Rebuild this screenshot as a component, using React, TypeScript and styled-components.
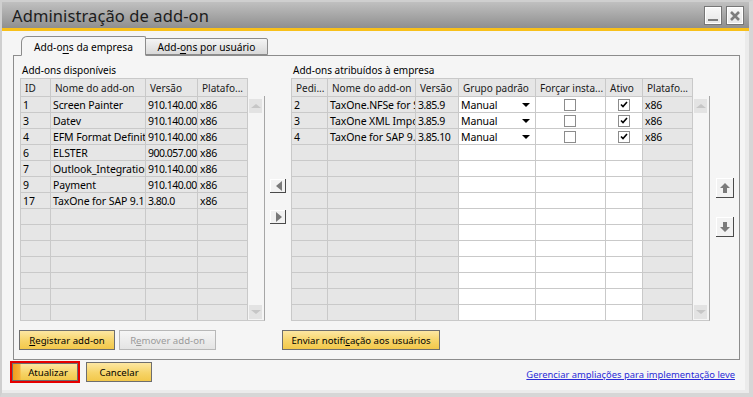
import React from "react";
import styled, { createGlobalStyle } from "styled-components";

const GlobalStyle = createGlobalStyle`
  html, body {
    margin: 0;
    padding: 0;
    background: #ffffff;
  }
  body {
    font-family: "Noto Sans", "Open Sans", sans-serif;
    font-size: 10px;
    color: #000;
  }
  * {
    box-sizing: border-box;
  }
`;

const available = [
  ["1", "Screen Painter", "910.140.00.", "x86"],
  ["3", "Datev", "910.140.00.", "x86"],
  ["4", "EFM Format Definition", "910.140.00.", "x86"],
  ["6", "ELSTER", "900.057.00.", "x86"],
  ["7", "Outlook_Integration", "910.140.00.", "x86"],
  ["9", "Payment", "910.140.00.", "x86"],
  ["17", "TaxOne for SAP 9.1", "3.80.0", "x86"],
];

const assigned = [
  ["2", "TaxOne.NFSe for SAP", "3.85.9"],
  ["3", "TaxOne XML Importer", "3.85.9"],
  ["4", "TaxOne for SAP 9.1", "3.85.10"],
];

const ROWS = 14;

const Check = () => (
  <svg width="8" height="7" viewBox="0 0 8 7">
    <path d="M1 3.5 L3 5.5 L7 1" stroke="#000" strokeWidth="1.6" fill="none" />
  </svg>
);

const App: React.FC = () => {
  const leftRows = Array.from({ length: ROWS }, (_, i) => available[i]);
  const rightRows = Array.from({ length: ROWS }, (_, i) => assigned[i]);

  return (
    <>
      <GlobalStyle />
      <Window>
        <TitleBar>
          <Title>Administração de add-on</Title>
          <WinButtons>
            <WinButton aria-label="Minimizar">
              <svg width="12" height="12" viewBox="0 0 12 12">
                <rect x="1" y="9" width="10" height="2" fill="#7d7d7d" />
              </svg>
            </WinButton>
            <WinButton aria-label="Fechar">
              <svg width="12" height="12" viewBox="0 0 12 12">
                <path d="M2 2 L10 10 M10 2 L2 10" stroke="#7d7d7d" strokeWidth="2.6" />
              </svg>
            </WinButton>
          </WinButtons>
        </TitleBar>
        <Accent />
        <Body>
          <Tabs>
            <Tab $active>
              Add-o<u>n</u>s da empresa
            </Tab>
            <Tab>
              Add-<u>o</u>ns por usuário
            </Tab>
          </Tabs>
          <Panel>
            <Lists>
              <Group>
                <GroupLabel>Add-ons disponíveis</GroupLabel>
                <ListBox>
                  <Grid $cols="30px 95px 52px 50px">
                    <HeadCell>ID</HeadCell>
                    <HeadCell>Nome do add-on</HeadCell>
                    <HeadCell>Versão</HeadCell>
                    <HeadCell>Platafo...</HeadCell>
                    {leftRows.map((r, i) =>
                      [0, 1, 2, 3].map((c) => (
                        <Cell key={`${i}-${c}`} $tight={c === 2}>
                          {r ? r[c] : ""}
                        </Cell>
                      ))
                    )}
                  </Grid>
                  <ScrollTrack>
                    <ScrollArrow>
                      <TriUp />
                    </ScrollArrow>
                    <ScrollArrow>
                      <TriDown />
                    </ScrollArrow>
                  </ScrollTrack>
                </ListBox>
              </Group>

              <MoveColumn>
                <ArrowButton aria-label="Remover">
                  <svg width="6" height="10" viewBox="0 0 6 10">
                    <path d="M6 0 L0 5 L6 10 Z" fill="#7a7a7a" />
                  </svg>
                </ArrowButton>
                <ArrowButton aria-label="Adicionar">
                  <svg width="6" height="10" viewBox="0 0 6 10">
                    <path d="M0 0 L6 5 L0 10 Z" fill="#7a7a7a" />
                  </svg>
                </ArrowButton>
              </MoveColumn>

              <Group>
                <GroupLabel $offset={2}>Add-ons atribuídos à empresa</GroupLabel>
                <ListBox>
                  <Grid $cols="36px 88px 43px 77px 70px 37px 50px">
                    <HeadCell>Pedi...</HeadCell>
                    <HeadCell>Nome do add-on</HeadCell>
                    <HeadCell>Versão</HeadCell>
                    <HeadCell>Grupo padrão</HeadCell>
                    <HeadCell>Forçar insta...</HeadCell>
                    <HeadCell>Ativo</HeadCell>
                    <HeadCell>Platafo...</HeadCell>
                    {rightRows.map((r, i) => (
                      <React.Fragment key={i}>
                        <Cell>{r ? r[0] : ""}</Cell>
                        <Cell>{r ? r[1] : ""}</Cell>
                        <Cell $tight>{r ? r[2] : ""}</Cell>
                        <Cell $white>
                          {r && (
                            <>
                              <span>Manual</span>
                              <DropArrow />
                            </>
                          )}
                        </Cell>
                        <Cell $white $center>
                          {r && <CheckBox />}
                        </Cell>
                        <Cell $white $center>
                          {r && (
                            <CheckBox>
                              <Check />
                            </CheckBox>
                          )}
                        </Cell>
                        <Cell>{r ? "x86" : ""}</Cell>
                      </React.Fragment>
                    ))}
                  </Grid>
                  <ScrollTrack>
                    <ScrollArrow>
                      <TriUp />
                    </ScrollArrow>
                    <ScrollArrow>
                      <TriDown />
                    </ScrollArrow>
                  </ScrollTrack>
                </ListBox>
              </Group>

              <OrderColumn>
                <OrderButton aria-label="Mover para cima">
                  <svg width="10" height="10" viewBox="0 0 10 10">
                    <path d="M5 0 L10 5 L7 5 L7 10 L3 10 L3 5 L0 5 Z" fill="#7a7a7a" />
                  </svg>
                </OrderButton>
                <OrderButton aria-label="Mover para baixo">
                  <svg width="10" height="10" viewBox="0 0 10 10">
                    <path d="M5 10 L10 5 L7 5 L7 0 L3 0 L3 5 L0 5 Z" fill="#7a7a7a" />
                  </svg>
                </OrderButton>
              </OrderColumn>
            </Lists>

            <PanelActions>
              <Button $width={96}>
                <u>R</u>egistrar add-on
              </Button>
              <Button $width={97} disabled>
                R<u>e</u>mover add-on
              </Button>
              <Button $width={158} $gap={62}>
                Enviar notifi<u>c</u>ação aos usuários
              </Button>
            </PanelActions>
          </Panel>

          <Footer>
            <Focus>
              <PrimaryButton>Atualizar</PrimaryButton>
            </Focus>
            <Button $width={66}>Cancelar</Button>
            <Link href="#">Gerenciar ampliações para implementação leve</Link>
          </Footer>
        </Body>
      </Window>
    </>
  );
};

const Window = styled.div`
  width: 753px;
  height: 397px;
  display: flex;
  flex-direction: column;
  border-top: 2px solid #cfcfcf;
  border-left: 2px solid #cfcfcf;
  border-right: 4px solid #d6d6d6;
  border-bottom: 4px solid #d6d6d6;
  background: #f5f5f5;
`;

const TitleBar = styled.div`
  height: 26px;
  flex: none;
  display: flex;
  align-items: center;
  justify-content: space-between;
  padding: 0 5px 0 10px;
  background: linear-gradient(#c0c0c0, #8f8f8f);
`;

const Title = styled.span`
  font-size: 16.5px;
  color: #1c1c1c;
  letter-spacing: 0.1px;
`;

const WinButtons = styled.div`
  display: flex;
  gap: 4px;
  padding-top: 1px;
`;

const WinButton = styled.button`
  width: 18px;
  height: 19px;
  padding: 0;
  display: flex;
  align-items: center;
  justify-content: center;
  border: 1px solid #767676;
  box-shadow: inset 0 0 0 1px #ffffff;
  background: linear-gradient(#f8f8f8, #e6e6e6);
`;

const Accent = styled.div`
  height: 3px;
  flex: none;
  background: #f8c01a;
`;

const Body = styled.div`
  flex: 1;
  display: flex;
  flex-direction: column;
  padding: 6px 6px 0 11px;
  border-right: 4px solid #ebebeb;
  border-bottom: 3px solid #ebebeb;
`;

const Tabs = styled.div`
  display: flex;
  align-items: flex-end;
  padding-left: 8px;
  height: 19px;
  margin-bottom: -1px;
  position: relative;
  z-index: 1;
`;

const Tab = styled.div<{ $active?: boolean }>`
  display: flex;
  align-items: center;
  justify-content: center;
  width: ${(p) => (p.$active ? 125 : 123)}px;
  height: ${(p) => (p.$active ? 20 : 17)}px;
  margin-bottom: ${(p) => (p.$active ? 0 : 1)}px;
  font-size: 10.2px;
  border: 1px solid #8c8c8c;
  border-bottom: ${(p) => (p.$active ? "1px solid #f5f5f5" : "1px solid #8c8c8c")};
  border-radius: ${(p) => (p.$active ? "6px 2px 0 0" : "1px 2px 0 0")};
  background: ${(p) => (p.$active ? "#f5f5f5" : "linear-gradient(#f4f4f4, #d9d9d9)")};
  margin-right: -1px;
  padding-top: 1px;

  u {
    text-underline-offset: 2px;
  }
`;

const Panel = styled.div`
  width: 727px;
  border: 1px solid #8c8c8c;
  padding: 7px 0 9px 6px;
  display: flex;
  flex-direction: column;
`;

const Lists = styled.div`
  display: flex;
  align-items: flex-start;
`;

const Group = styled.div`
  display: flex;
  flex-direction: column;
`;

const GroupLabel = styled.div<{ $offset?: number }>`
  height: 15px;
  line-height: 14px;
  font-size: 10px;
  padding-left: ${(p) => p.$offset ?? 2}px;
`;

const ListBox = styled.div`
  display: flex;
  align-items: flex-start;
`;

const Grid = styled.div<{ $cols: string }>`
  display: grid;
  grid-template-columns: ${(p) => p.$cols};
  grid-template-rows: 18px;
  grid-auto-rows: 16px;
  border-left: 1px solid #c9c9c9;
  border-top: 1px solid #c9c9c9;
`;

const Cell = styled.div<{ $white?: boolean; $center?: boolean; $tight?: boolean }>`
  display: flex;
  align-items: center;
  justify-content: ${(p) => (p.$center ? "center" : "space-between")};
  padding: 0 ${(p) => (p.$white ? 5 : 0)}px 0 2px;
  overflow: hidden;
  white-space: nowrap;
  background: ${(p) => (p.$white ? "#ffffff" : "#e6e6e6")};
  border-right: 1px solid #c9c9c9;
  border-bottom: 1px solid #c9c9c9;
  font-size: 10.5px;
  letter-spacing: ${(p) => (p.$tight ? -0.5 : -0.1)}px;
`;

const HeadCell = styled(Cell)`
  padding-left: 4px;
  background: #e6e6e6;
  justify-content: flex-start;
  color: #1a1a1a;
  font-size: 10px;
  letter-spacing: 0;
`;

const DropArrow = styled.span`
  width: 0;
  height: 0;
  border-left: 4px solid transparent;
  border-right: 4px solid transparent;
  border-top: 4px solid #000;
  flex: none;
`;

const CheckBox = styled.span`
  width: 12px;
  height: 12px;
  border: 1px solid #8c8c8c;
  background: #fff;
  display: flex;
  align-items: center;
  justify-content: center;
  margin-left: 2px;
`;

const ScrollTrack = styled.div`
  width: 17px;
  height: 225px;
  margin-top: 18px;
  padding: 3px 2px 1px 1px;
  display: flex;
  flex-direction: column;
  justify-content: space-between;
  border-right: 1px solid #a6a6a6;
  border-bottom: 1px solid #c9c9c9;
  background: #f5f5f5;
`;

const ScrollArrow = styled.div`
  height: 14px;
  display: flex;
  align-items: center;
  justify-content: center;
  background: #e3e3e3;
`;

const TriUp = styled.span`
  border-left: 5px solid transparent;
  border-right: 5px solid transparent;
  border-bottom: 4px solid #c6c6c6;
`;

const TriDown = styled.span`
  border-left: 5px solid transparent;
  border-right: 5px solid transparent;
  border-top: 4px solid #c6c6c6;
`;

const MoveColumn = styled.div`
  width: 26px;
  padding: 116px 0 0 5px;
  display: flex;
  flex-direction: column;
  gap: 17px;
`;

const ArrowButton = styled.button`
  width: 16px;
  height: 14px;
  padding: 0 0 0 3px;
  display: flex;
  align-items: center;
  justify-content: center;
  border: none;
  border-right: 1px solid #4a4a4a;
  border-bottom: 1px solid #4a4a4a;
  box-shadow: inset 1px 1px 0 #ffffff;
  background: #f2f2f2;
`;

const OrderColumn = styled.div`
  padding: 115px 0 0 6px;
  display: flex;
  flex-direction: column;
  gap: 19px;
`;

const OrderButton = styled(ArrowButton)`
  width: 18px;
  height: 20px;
  padding: 0;
`;

const PanelActions = styled.div`
  display: flex;
  gap: 4px;
  margin-top: 9px;
  margin-left: -1px;
`;

const Button = styled.button<{ $width: number; $gap?: number }>`
  width: ${(p) => p.$width}px;
  height: 20px;
  margin-left: ${(p) => p.$gap ?? 0}px;
  padding: 0;
  font-family: inherit;
  font-size: 9.6px;
  color: #000;
  border: 1px solid #6e6e6e;
  background: linear-gradient(#fde7a2, #f6d468 55%, #f2c84a);
  white-space: nowrap;

  &:disabled {
    color: #9a9a9a;
    border-color: #b8b8b8;
    background: linear-gradient(#f5f5f5, #e4e4e4);
  }
`;

const Footer = styled.div`
  display: flex;
  align-items: center;
  gap: 6px;
  margin-top: 1px;
  margin-left: -3px;
  padding-right: 4px;
`;

const Focus = styled.div`
  border: 2px solid #e60000;
  display: flex;
`;

const PrimaryButton = styled.button`
  width: 66px;
  height: 18px;
  padding: 0 0 0 6px;
  font-family: inherit;
  font-size: 9.6px;
  color: #000;
  border: 1px solid #6e6e6e;
  background: linear-gradient(90deg, #f29a1c 0, #f6b23a 7px, transparent 8px),
    linear-gradient(#fde7a2, #f6d468 55%, #f2c84a);
`;

const Link = styled.a`
  margin-left: auto;
  margin-top: 4px;
  font-size: 9.4px;
  color: #2b2bd8;
  text-decoration: underline;
`;

export default App;
